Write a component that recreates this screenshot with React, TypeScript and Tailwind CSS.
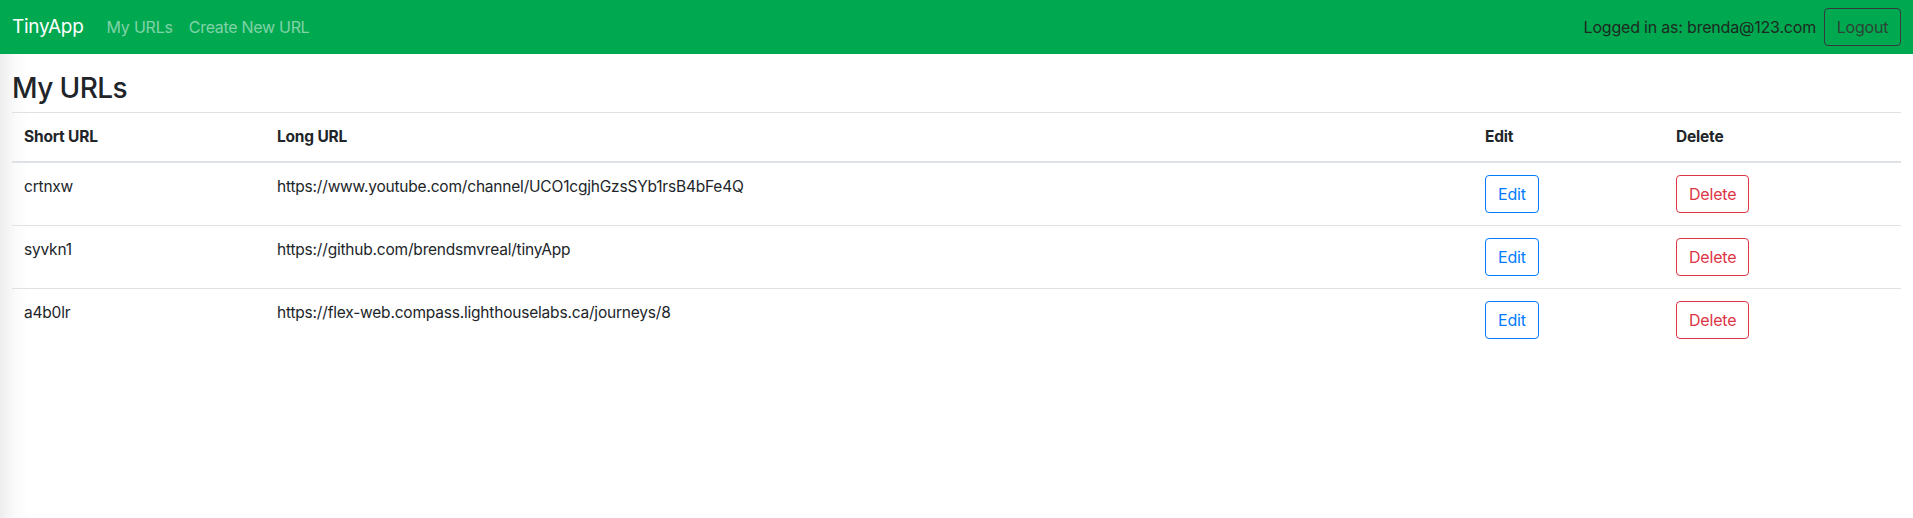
const urls = [
  { short: "crtnxw", long: "https://www.youtube.com/channel/UCO1cgjhGzsSYb1rsB4bFe4Q" },
  { short: "syvkn1", long: "https://github.com/brendsmvreal/tinyApp" },
  { short: "a4b0lr", long: "https://flex-web.compass.lighthouselabs.ca/journeys/8" },
];

export default function App() {
  return (
    <div className="min-h-[518px] bg-white text-[#212529] font-['Inter','Liberation_Sans',sans-serif]">
      {/* navbar */}
      <nav className="h-[54px] bg-[#00a84f] flex items-center justify-between px-3">
        <div className="flex items-center">
          <span className="text-white text-[19px] mr-[23px] tracking-[-0.3px]">TinyApp</span>
          <a className="text-white/50 text-[16px] mr-4 tracking-[-0.2px]">My URLs</a>
          <a className="text-white/50 text-[16px] tracking-[-0.3px]">Create New URL</a>
        </div>
        <div className="flex items-center gap-2">
          <span className="text-[#1d2a22] text-[16px] tracking-[-0.2px]">Logged in as: brenda@123.com</span>
          <button className="h-[38px] w-[77px] border border-[#343a40] rounded-[4px] text-[#2c4436] text-[16px] tracking-[-0.2px]">
            Logout
          </button>
        </div>
      </nav>

      {/* page body */}
      <main className="h-[464px] px-3 bg-[linear-gradient(to_right,#ededed,#fafafa_14px,#fff_28px)]">
        <h2 className="text-[28px] font-medium leading-[1.2] pt-[18px] pb-[6px] tracking-[-0.6px]">My URLs</h2>
        <table className="w-full border-collapse text-[15.5px] tracking-[-0.2px]">
          <thead>
            <tr className="border-t border-[#dee2e6] border-b-2">
              <th className="w-[253px] text-left font-bold px-3 py-3 leading-6">Short URL</th>
              <th className="text-left font-bold px-3 py-3 leading-6">Long URL</th>
              <th className="w-[191px] text-left font-bold px-3 py-3 leading-6">Edit</th>
              <th className="w-[237px] text-left font-bold px-3 py-3 leading-6">Delete</th>
            </tr>
          </thead>
          <tbody>
            {urls.map((u) => (
              <tr key={u.short} className="border-t border-[#dee2e6] first:border-t-0">
                <td className="px-3 py-3 align-top leading-6">{u.short}</td>
                <td className="px-3 py-3 align-top leading-6">{u.long}</td>
                <td className="px-3 py-3 align-top">
                  <button className="h-[38px] px-3 border border-[#007bff] rounded-[4px] text-[#007bff] text-[16px]">
                    Edit
                  </button>
                </td>
                <td className="px-3 py-3 align-top">
                  <button className="h-[38px] px-3 border border-[#dc3545] rounded-[4px] text-[#dc3545] text-[16px]">
                    Delete
                  </button>
                </td>
              </tr>
            ))}
          </tbody>
        </table>
      </main>
    </div>
  );
}
